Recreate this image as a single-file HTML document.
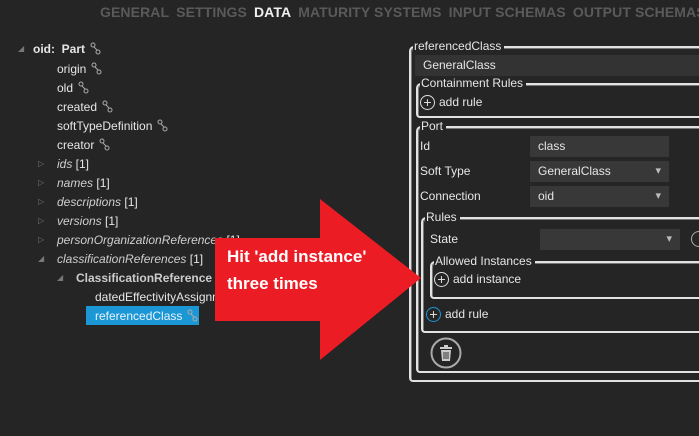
<!DOCTYPE html>
<html><head><meta charset="utf-8"><style>
*{margin:0;padding:0;box-sizing:border-box}
html,body{width:699px;height:436px;overflow:hidden}
body{background:#252526;position:relative;font-family:"Liberation Sans",sans-serif;color:#e6e6e6;font-size:12px}
.a{position:absolute;white-space:nowrap}
.tabs{top:4px;left:100px;font-size:14px;font-weight:bold;color:#5a5a5a;letter-spacing:0.1px}
.tabs span{margin-right:7px}
.tr{font-size:12px}
.i{font-style:italic;color:#cfcfcf}
.lk{display:inline-block;margin-left:5px;vertical-align:-2px}
.tri{color:#777;font-size:8px}
.box{position:absolute;border:2px solid #e2e2e2;border-right:none;border-bottom-left-radius:4px;border-top-left-radius:5px;box-shadow:inset 1px 1px 0 #777}
.lg{position:absolute;top:-9px;left:2px;background:#252526;padding:0 3px 0 1px;font-size:12px;color:#e6e6e6}
.inp{position:absolute;background:#383838;height:21px;font-size:12px;padding:3px 8px;color:#e6e6e6}
.dd::after{content:"▾";position:absolute;right:8px;top:3px;color:#bbb;font-size:11px}
.plus{display:inline-block;width:15px;height:15px;border:1.5px solid #ddd;border-radius:50%;text-align:center;line-height:12px;font-size:14px;vertical-align:middle;margin-right:4px;color:#ddd}
</style></head><body>
<svg width="0" height="0" style="position:absolute"><defs><g id="lnk"><circle cx="3" cy="3" r="2" fill="none" stroke="#aaa" stroke-width="1"/><circle cx="8" cy="10" r="2" fill="none" stroke="#aaa" stroke-width="1"/><path d="M4 5 L7 8" stroke="#aaa" stroke-width="1"/></g></defs></svg>
<div class="a tabs"><span>GENERAL</span><span>SETTINGS</span><span style="color:#f0f0f0">DATA</span><span>MATURITY SYSTEMS</span><span>INPUT SCHEMAS</span><span>OUTPUT SCHEMAS</span></div>

<div class="a tri" style="left:18px;top:44px">◢</div>
<div class="a tr" style="left:33px;top:42px;font-weight:bold">oid:&nbsp; Part<svg class="lk" width="11" height="13"><use href="#lnk"/></svg></div>
<div class="a tr" style="left:57px;top:62px">origin<svg class="lk" width="11" height="13"><use href="#lnk"/></svg></div>
<div class="a tr" style="left:57px;top:81px">old<svg class="lk" width="11" height="13"><use href="#lnk"/></svg></div>
<div class="a tr" style="left:57px;top:100px">created<svg class="lk" width="11" height="13"><use href="#lnk"/></svg></div>
<div class="a tr" style="left:57px;top:119px">softTypeDefinition<svg class="lk" width="11" height="13"><use href="#lnk"/></svg></div>
<div class="a tr" style="left:57px;top:138px">creator<svg class="lk" width="11" height="13"><use href="#lnk"/></svg></div>
<div class="a tri" style="left:38px;top:159px">▷</div><div class="a tr" style="left:57px;top:157px"><span class="i">ids</span> [1]</div>
<div class="a tri" style="left:38px;top:178px">▷</div><div class="a tr" style="left:57px;top:176px"><span class="i">names</span> [1]</div>
<div class="a tri" style="left:38px;top:197px">▷</div><div class="a tr" style="left:57px;top:195px"><span class="i">descriptions</span> [1]</div>
<div class="a tri" style="left:38px;top:216px">▷</div><div class="a tr" style="left:57px;top:214px"><span class="i">versions</span> [1]</div>
<div class="a tri" style="left:38px;top:235px">▷</div><div class="a tr" style="left:57px;top:233px"><span class="i">personOrganizationReferences</span> [1]</div>
<div class="a tri" style="left:38px;top:254px">◢</div><div class="a tr" style="left:57px;top:252px"><span class="i">classificationReferences</span> [1]</div>
<div class="a tri" style="left:57px;top:273px">◢</div><div class="a tr" style="left:76px;top:271px;font-weight:bold;color:#ccc">ClassificationReference</div>
<div class="a tr" style="left:95px;top:290px">datedEffectivityAssignments</div>
<div class="a tr" style="left:86px;top:306px;background:#1c97d6;width:113px;height:19px;padding:3px 9px;color:#e8f4fc">referencedClass<svg class="lk" width="11" height="13"><use href="#lnk"/></svg></div>

<div class="box" style="left:409px;top:46px;width:295px;height:336px">
 <div class="lg">referencedClass</div>
 <div class="inp" style="left:4px;top:7px;width:290px;background:#333">GeneralClass</div>
 <div class="box" style="left:5px;top:35px;width:290px;height:35px"><div class="lg">Containment Rules</div><div class="a" style="left:2px;top:10px"><span class="plus">+</span>add rule</div></div>
 <div class="box" style="left:5px;top:78px;width:290px;height:247px"><div class="lg">Port</div>
  <div class="a" style="left:2px;top:11px">Id</div><div class="inp" style="left:112px;top:8px;width:139px">class</div>
  <div class="a" style="left:2px;top:36px">Soft Type</div><div class="inp dd" style="left:112px;top:33px;width:139px">GeneralClass</div>
  <div class="a" style="left:2px;top:61px">Connection</div><div class="inp dd" style="left:112px;top:58px;width:139px">oid</div>
  <div class="box" style="left:3px;top:89px;width:285px;height:116px"><div class="lg">Rules</div>
   <div class="a" style="left:7px;top:13px">State</div><div class="inp dd" style="left:117px;top:10px;width:140px"></div>
   <div class="a" style="left:268px;top:12px;width:16px;height:16px;border:1.5px solid #aaa;border-radius:50%"></div>
   <div class="box" style="left:7px;top:42px;width:270px;height:38px"><div class="lg">Allowed Instances</div><div class="a" style="left:2px;top:9px"><span class="plus">+</span>add instance</div></div>
   <div class="a" style="left:3px;top:88px"><span class="plus" style="border-color:#1c97d6">+</span>add rule</div>
  </div>
  <svg class="a" style="left:12px;top:209px" width="32" height="32"><circle cx="16" cy="16" r="14.5" fill="none" stroke="#aaa" stroke-width="2"/><rect x="10" y="10" width="12" height="2" fill="#ccc"/><rect x="14" y="8" width="4" height="2" fill="#ccc"/><path d="M11 13 H21 L20 24 H12 Z" fill="#ccc"/><path d="M14 15V22M16 15V22M18 15V22" stroke="#333" stroke-width="1"/></svg>
 </div>
</div>

<svg class="a" style="left:0;top:0" width="699" height="436"><polygon points="215,238 320,238 320,199 421,278 320,360 320,321 215,321" fill="#ec1c24"/></svg>
<div class="a" style="left:227px;top:243px;font-size:17px;font-weight:bold;color:#fff;line-height:27px">Hit 'add instance'<br>three times</div>
</body></html>
